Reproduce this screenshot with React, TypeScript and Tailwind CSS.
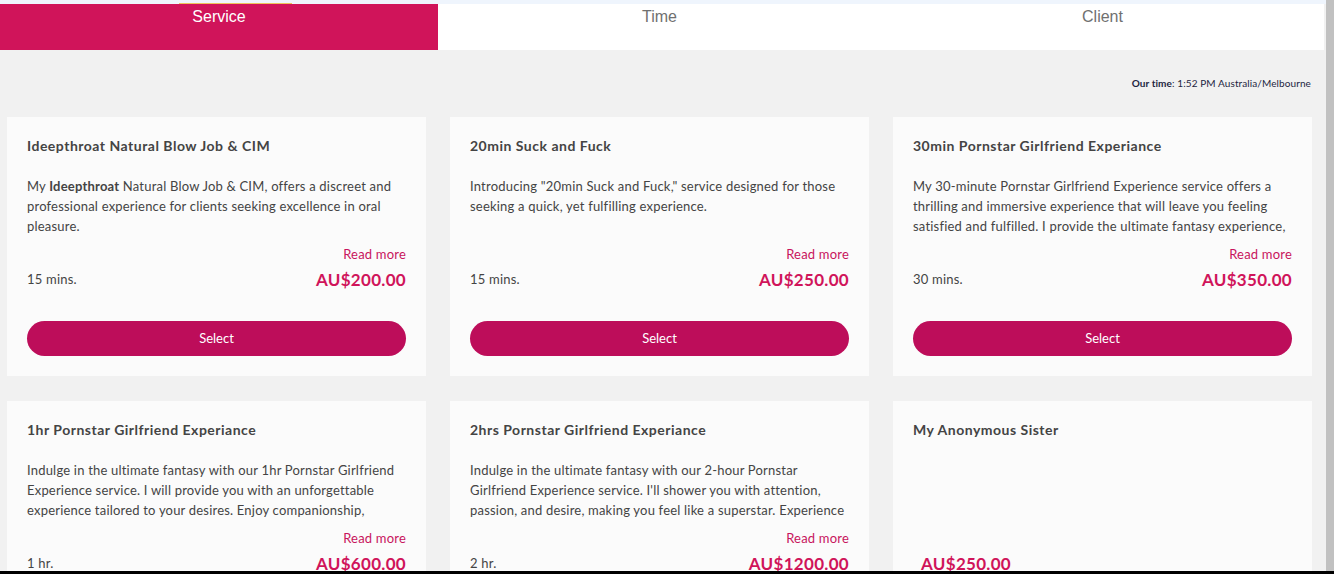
import { Fragment } from "react"

type Service = {
  id: number
  title: string
  description: React.ReactNode
  duration: string
  price: string
  readMore: boolean
}

const services: Service[] = [
  {
    id: 1,
    title: "Ideepthroat Natural Blow Job & CIM",
    description: (
      <Fragment>
        My <strong className="font-bold">Ideepthroat</strong> Natural Blow Job &amp; CIM, offers a discreet and professional experience for clients seeking excellence in oral pleasure.
      </Fragment>
    ),
    duration: "15 mins.",
    price: "AU$200.00",
    readMore: true,
  },
  {
    id: 2,
    title: "20min Suck and Fuck",
    description: "Introducing \"20min Suck and Fuck,\" service designed for those seeking a quick, yet fulfilling experience.",
    duration: "15 mins.",
    price: "AU$250.00",
    readMore: true,
  },
  {
    id: 3,
    title: "30min Pornstar Girlfriend Experiance",
    description: "My 30-minute Pornstar Girlfriend Experience service offers a thrilling and immersive experience that will leave you feeling satisfied and fulfilled. I provide the ultimate fantasy experience, tailored to your every desire.",
    duration: "30 mins.",
    price: "AU$350.00",
    readMore: true,
  },
  {
    id: 4,
    title: "1hr Pornstar Girlfriend Experiance",
    description: "Indulge in the ultimate fantasy with our 1hr Pornstar Girlfriend Experience service. I will provide you with an unforgettable experience tailored to your desires. Enjoy companionship, intimacy and passion.",
    duration: "1 hr.",
    price: "AU$600.00",
    readMore: true,
  },
  {
    id: 5,
    title: "2hrs Pornstar Girlfriend Experiance",
    description: "Indulge in the ultimate fantasy with our 2-hour Pornstar Girlfriend Experience service. I'll shower you with attention, passion, and desire, making you feel like a superstar. Experience the thrill.",
    duration: "2 hr.",
    price: "AU$1200.00",
    readMore: true,
  },
  {
    id: 6,
    title: "My Anonymous Sister",
    description: "",
    duration: "",
    price: "AU$250.00",
    readMore: false,
  },
]

export default function App() {
  return (
    <div className="flex h-screen overflow-hidden bg-[#f1f1f1] font-['Lato',sans-serif]">
      <div className="flex-1 flex flex-col min-w-0">
        <div className="h-[4px] shrink-0 bg-[#eff5fd]" />

        {/* tabs */}
        <div className="flex h-[46px] shrink-0 pr-[2px]">
          <div className="relative w-[438px] bg-[#d0145a] text-center">
            <div className="absolute left-[179px] top-[-1px] w-[113px] h-[1px] bg-[#efc35a]" />
            <span className="block pt-[4px] text-[16px] leading-[18px] text-white font-['Liberation_Sans',sans-serif]">Service</span>
          </div>
          <div className="flex-1 bg-white text-center">
            <span className="block pt-[4px] text-[16px] leading-[18px] text-[#707070] font-['Liberation_Sans',sans-serif]">Time</span>
          </div>
          <div className="flex-1 bg-white text-center">
            <span className="block pt-[4px] text-[16px] leading-[18px] text-[#707070] font-['Liberation_Sans',sans-serif]">Client</span>
          </div>
        </div>

        <div className="pl-[7px] pr-[14px] shrink-0">
          <p className="pt-[27px] pr-[1px] h-[39px] text-right text-[10px] leading-[12px] tracking-[0.1px] text-[#1d2541]">
            <span className="font-bold">Our time</span>: 1:52 PM Australia/Melbourne
          </p>

          <div className="mt-[28px] grid grid-cols-3 gap-x-[24px] gap-y-[25px]">
            {services.map((s) => (
              <div key={s.id} className="bg-[#fbfbfb] px-[20px] pt-[19px] pb-[20px]">
                <h3 className="text-[14px] leading-[20px] font-bold tracking-[0.5px] text-[#444]">{s.title}</h3>
                <div className="mt-[20px] h-[60px] overflow-hidden text-[13px] leading-[20px] tracking-[0.2px] text-[#444]">
                  {s.description}
                </div>
                <div className="mt-[9px] h-[18px] text-right text-[13px] leading-[18px] tracking-[0.2px] text-[#c8155d]">
                  {s.readMore ? "Read more" : ""}
                </div>
                <div className="mt-[7px] flex items-center justify-between h-[20px]">
                  {s.duration ? (
                    <span className="text-[13px] tracking-[0.2px] text-[#444]">{s.duration}</span>
                  ) : null}
                  <span className={`text-[17px] leading-[20px] font-bold tracking-[0.3px] text-[#d0145a] ${s.duration ? "" : "ml-[8px]"}`}>{s.price}</span>
                </div>
                <button className="mt-[31px] w-full h-[35px] rounded-full bg-[#bd0d5a] text-white text-[13px]">
                  Select
                </button>
              </div>
            ))}
          </div>
        </div>
      </div>

      {/* scrollbar */}
      <div className="w-[8px] bg-[#c1c1c1]" />

      <div className="fixed left-0 right-0 bottom-0 h-[3px] bg-black" />
    </div>
  )
}
